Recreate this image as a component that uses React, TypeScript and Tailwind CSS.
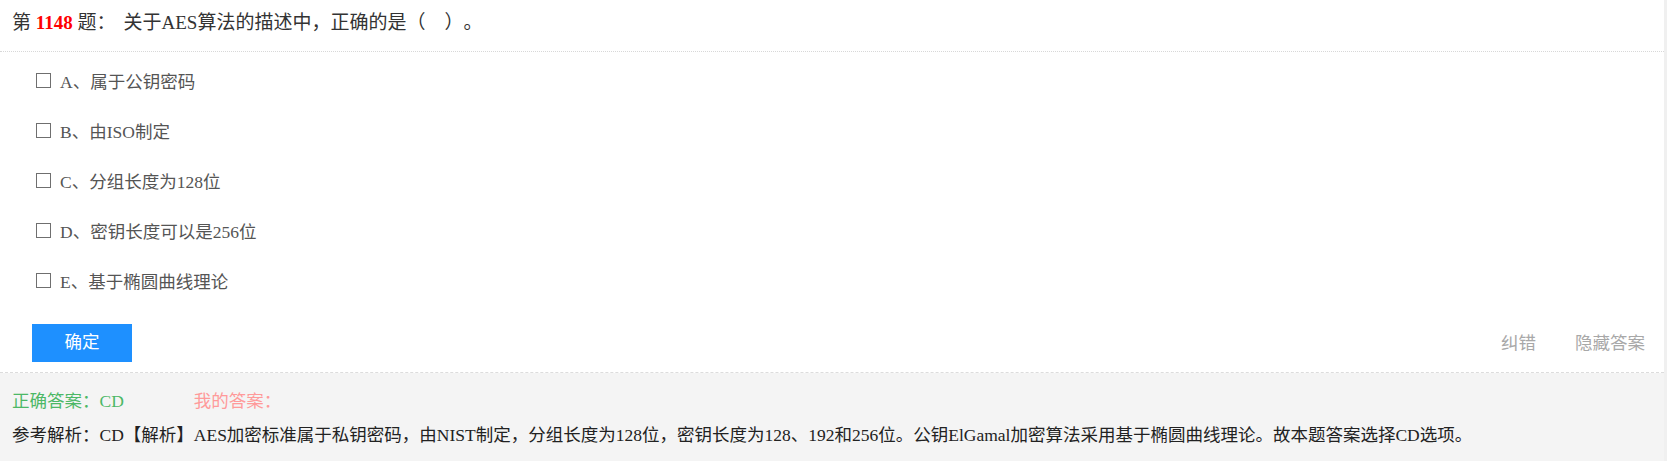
import React from "react";

const options = [
  { key: "A", text: "属于公钥密码" },
  { key: "B", text: "由ISO制定" },
  { key: "C", text: "分组长度为128位" },
  { key: "D", text: "密钥长度可以是256位" },
  { key: "E", text: "基于椭圆曲线理论" },
];

const font = { fontFamily: '"Liberation Serif", "Noto Sans CJK SC", serif' };

export default function App() {
  return (
    <div className="min-h-[461px] w-full bg-[#f0f0f0] flex [text-spacing-trim:space-all]" style={font}>
      <div className="w-[1664px] flex flex-col">
        {/* Question */}
        <div className="bg-white">
          <div className="h-[52px] pl-3 pt-[10px] text-[19px] leading-[26px] text-[#333] border-b border-dotted border-[#d8d8d8]">
            第 <b className="text-[#ff0000] font-bold">1148</b> 题：<span className="ml-[8px]">关于AES算法的描述中，正确的是（&nbsp;&nbsp;&nbsp;&nbsp;）。</span>
          </div>

          {/* Options */}
          <div className="pt-[5px] pl-9">
            {options.map((o) => (
              <div key={o.key} className="h-[50px] flex items-center text-[17.5px] text-[#555]">
                <span className="w-[15px] h-[15px] border border-[#6f6f6f] bg-white mr-[9px] -mt-[3px] shrink-0" />
                <span>
                  {o.key}、{o.text}
                </span>
              </div>
            ))}
          </div>

          {/* Actions */}
          <div className="mt-[17px] pb-[10px] pl-8 pr-[19px] flex items-center justify-between border-b border-dashed border-[#dcdcdc]">
            <button className="w-[100px] h-[38px] bg-[#1e90ff] text-white text-[17.5px] leading-none">
              确定
            </button>
            <div className="flex items-center gap-[39px] text-[17.5px] text-[#a8a8a8]">
              <a href="#">纠错</a>
              <a href="#">隐藏答案</a>
            </div>
          </div>
        </div>

        {/* Answer */}
        <div className="flex-1 bg-[#f4f4f4] pl-3 pt-[13px] text-[17.5px] leading-[30px]">
          <div className="flex">
            <span className="text-[#4cb866]">正确答案：CD</span>
            <span className="ml-[70px] text-[#ff9a9a]">我的答案：</span>
          </div>
          <div className="mt-[4px] text-[#222]">
            参考解析：CD【解析】AES加密标准属于私钥密码，由NIST制定，分组长度为128位，密钥长度为128、192和256位。公钥ElGamal加密算法采用基于椭圆曲线理论。故本题答案选择CD选项。
          </div>
        </div>
      </div>
    </div>
  );
}
